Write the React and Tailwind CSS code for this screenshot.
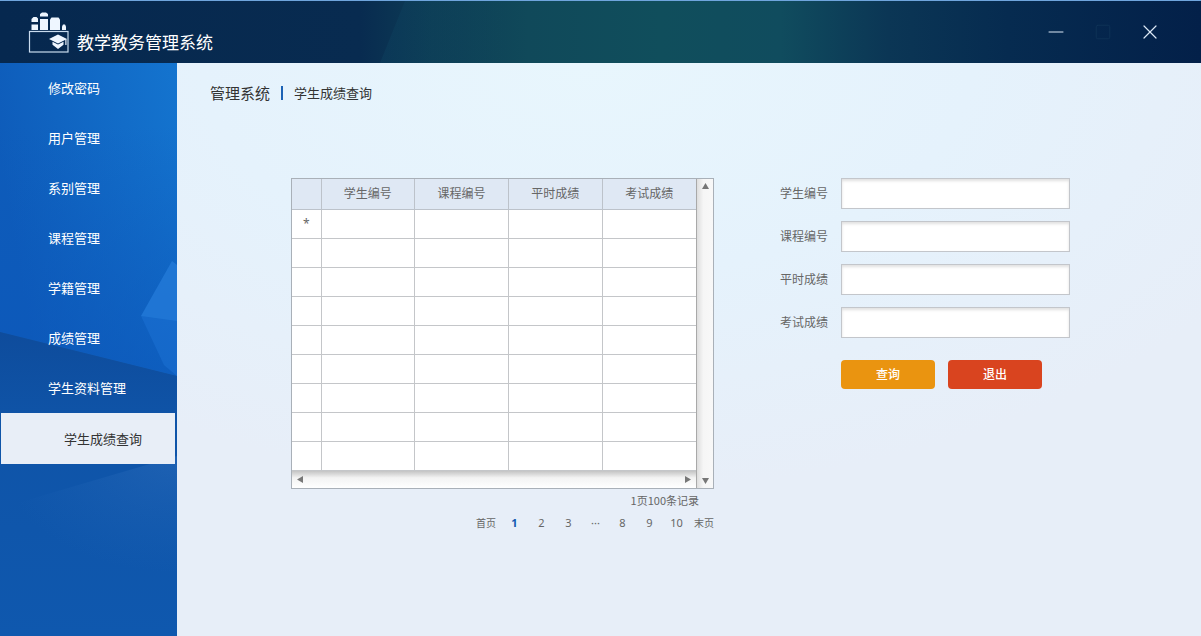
import React from 'react';
import { Minus, Square, X } from 'lucide-react';

const menuItems = [
  '修改密码',
  '用户管理',
  '系别管理',
  '课程管理',
  '学籍管理',
  '成绩管理',
  '学生资料管理',
];

const columns = ['学生编号', '课程编号', '平时成绩', '考试成绩'];
const pages = ['1', '2', '3', '···', '8', '9', '10'];
const rows = [0, 1, 2, 3, 4, 5, 6, 7, 8];

const Logo = () => (
  <svg width="42" height="42" viewBox="0 0 42 42" fill="none" aria-hidden="true">
    <rect x="1.5" y="19.5" width="38.5" height="20.5" stroke="#c9dcef" strokeWidth="1.2" />
    <g fill="#eef6ff">
      <path d="M3.500 10V7l2-2h3l1.500 1.500V10zM3.500 12.500H10V18H3.500z" />
      <path d="M12 4.500V2l2-1.500h4L20 2v2.500zM12 7h8v11h-8z" />
      <path d="M22 18V7.500L23.500 5.500h7l1.500 2V18z" />
      <path d="M34 18v-3.500l1-2h2l1 2V18z" />
      <path d="M30 22.500l9 4.500-9 4.500-9-4.500z" />
      <path d="M24.500 29.700l5.500 2.800 5.500-2.800v3L30 37l-5.500-4.300z" />
      <path d="M37.300 27h1.200v6h-1.200z" />
    </g>
  </svg>
);

const Header = () => (
  <header className="relative flex h-[63px] items-center justify-between border-t border-[#6fa5dd] bg-[#05264d] pr-[39px] pl-7">
    <svg className="absolute inset-0 h-full w-full" viewBox="0 0 1201 62" preserveAspectRatio="none" aria-hidden="true">
      <defs>
        <linearGradient id="headBg">
          <stop offset="0" stopColor="#06284f" />
          <stop offset="0.3" stopColor="#082b50" />
          <stop offset="0.36" stopColor="#0d3d55" />
          <stop offset="0.44" stopColor="#10495a" />
          <stop offset="0.55" stopColor="#104e5c" />
          <stop offset="0.65" stopColor="#104c5e" />
          <stop offset="0.74" stopColor="#0b3655" />
          <stop offset="0.84" stopColor="#062b50" />
          <stop offset="1" stopColor="#032049" />
        </linearGradient>
        <linearGradient id="headFacet">
          <stop offset="0" stopColor="#0f4a66" stopOpacity="0.3" />
          <stop offset="0.4" stopColor="#0f4a66" stopOpacity="0" />
        </linearGradient>
      </defs>
      <rect width="1201" height="62" fill="url(#headBg)" />
      <path d="M405 0L380 62H700V0z" fill="url(#headFacet)" />
    </svg>
    <div className="relative flex items-center gap-[7px] pt-px">
      <Logo />
      <h1 className="pt-5 text-[17px] leading-6 text-white">教学教务管理系统</h1>
    </div>
    <div className="relative flex items-center gap-[26px] text-[#dce8f5]">
      <button type="button" aria-label="最小化">
        <Minus size={24} strokeWidth={1} />
      </button>
      <button type="button" aria-label="最大化" disabled className="text-[#123659]">
        <Square size={18} strokeWidth={1} />
      </button>
      <button type="button" aria-label="关闭">
        <X size={24} strokeWidth={1.200} />
      </button>
    </div>
  </header>
);

const Sidebar = () => (
  <aside className="relative w-[177px] shrink-0 overflow-hidden bg-[#0f57ac]">
    <svg className="absolute top-0 left-0" width="177" height="573" viewBox="0 0 177 573" aria-hidden="true">
      <defs>
        <linearGradient id="sideTop" x1="0" y1="0.300" x2="1" y2="0">
          <stop offset="0" stopColor="#0e5cba" />
          <stop offset="1" stopColor="#1474cf" />
        </linearGradient>
        <linearGradient id="sideFade" x1="0" y1="0" x2="0" y2="1">
          <stop offset="0.200" stopColor="#0c57ba" stopOpacity="0" />
          <stop offset="1" stopColor="#0c57ba" stopOpacity="0.700" />
        </linearGradient>
        <linearGradient id="sideLow" x1="0" y1="0" x2="0" y2="1">
          <stop offset="0" stopColor="#0e4c9c" />
          <stop offset="0.300" stopColor="#0f54a8" />
          <stop offset="1" stopColor="#0f58ae" />
        </linearGradient>
        <radialGradient id="sideRay" cx="1" cy="0" r="1">
          <stop offset="0" stopColor="#3a78c4" stopOpacity="0.350" />
          <stop offset="1" stopColor="#2a6fc0" stopOpacity="0" />
        </radialGradient>
      </defs>
      <path d="M0 0H177V313L0 269z" fill="url(#sideTop)" />
      <path d="M0 0H177V313L0 269z" fill="url(#sideFade)" />
      <path d="M172 198L177 202V313L164 302L141 253z" fill="#1a70d2" opacity="0.600" />
      <path d="M172 198L177 202V258L141 253z" fill="#2e86e2" opacity="0.400" />
      <path d="M0 269L177 313V573H0z" fill="url(#sideLow)" />
      <path d="M177 393L0 445V510H177z" fill="url(#sideRay)" />
    </svg>
    <nav className="relative text-[13px] leading-5 text-white">
      {menuItems.map((item) => (
        <a key={item} href="#" className="flex h-[50px] items-center pl-12">
          {item}
        </a>
      ))}
      <a
        href="#"
        aria-current="page"
        className="mr-[2px] ml-px flex h-[51px] items-center bg-[#e8eef7] pl-[63px] text-[#333]"
      >
        学生成绩查询
      </a>
    </nav>
  </aside>
);

const Arrow = ({ points }) => (
  <svg width="7" height="7" viewBox="0 0 7 7" fill="#777" aria-hidden="true">
    <polygon points={points} />
  </svg>
);

const ScoreTable = () => (
  <section>
    <div className="grid grid-cols-[1fr_17px] border border-[#a9b0b8] bg-white">
      <div>
        <table className="w-full table-fixed border-collapse text-xs text-[#666]">
          <thead>
            <tr className="h-[30px] bg-[#dfe8f4]">
              <th className="w-[29px] border-r border-b border-[#bcc2ca] p-0" aria-label="行标记"></th>
              {columns.map((col) => (
                <th key={col} className="border-b border-l border-[#bcc2ca] p-0 font-normal">
                  {col}
                </th>
              ))}
            </tr>
          </thead>
          <tbody>
            {rows.map((row) => (
              <tr key={row} className="h-[29px]">
                <td className="border-r border-b border-[#c4c6c9] p-0 text-center">{row === 0 ? '*' : ''}</td>
                {columns.map((col) => (
                  <td key={col} className="border-b border-l border-[#c4c6c9] p-0"></td>
                ))}
              </tr>
            ))}
          </tbody>
        </table>
        <div className="flex h-[17px] items-center justify-between bg-linear-to-b from-[#c4c4c4] via-[#f3f3f3] via-40% to-white px-[5px]">
          <Arrow points="6,0 6,7 0,3.500" />
          <Arrow points="1,0 1,7 7,3.500" />
        </div>
      </div>
      <div className="flex flex-col items-center justify-between border-l border-[#a9a9a9] bg-linear-to-r from-[#dedede] via-[#f6f6f6] via-40% to-[#f8f8f8] py-1">
        <Arrow points="0,6 7,6 3.500,0" />
        <Arrow points="0,1 7,1 3.500,7" />
      </div>
    </div>
    <p className="mt-[3px] pr-[15px] text-right font-['Noto_Sans_CJK_SC',sans-serif] text-[11px] leading-4 text-[#666]">
      1页100条记录
    </p>
    <nav className="mt-[7px] flex items-center justify-end text-[10px] leading-4 text-[#666]" aria-label="分页">
      <a href="#" className="mr-[5px]">首页</a>
      {pages.map((page) => (
        <a
          key={page}
          href="#"
          className={page === '1' ? 'w-[27px] text-center text-[11px] font-bold text-[#1159b0]' : 'w-[27px] text-center text-[11px]'}
        >
          {page}
        </a>
      ))}
      <a href="#" className="ml-1">末页</a>
    </nav>
  </section>
);

const QueryForm = () => (
  <form onSubmit={(e) => e.preventDefault()}>
    <div className="flex flex-col gap-3">
      {columns.map((field) => (
        <label key={field} className="flex items-center gap-[13px] text-xs text-[#666]">
          <span className="shrink-0">{field}</span>
          <input
            type="text"
            className="h-[31px] w-full min-w-0 border border-[#c3c6cb] bg-white px-2 shadow-[inset_0_2px_3px_rgba(0,0,0,0.12)] outline-none"
          />
        </label>
      ))}
    </div>
    <div className="mt-[22px] flex gap-[13px] pl-[61px] text-xs font-medium text-white">
      <button type="submit" className="h-[29px] w-[94px] rounded bg-[#ea9410]">
        查询
      </button>
      <button type="button" className="h-[29px] w-[94px] rounded bg-[#d9441f]">
        退出
      </button>
    </div>
  </form>
);

const App = () => {
  return (
    <div className="flex min-h-screen flex-col font-['Noto_Sans','Noto_Sans_CJK_SC',sans-serif]">
      <Header />
      <div className="flex flex-1">
        <Sidebar />
        <main className="flex-1 bg-[#e7eef8] bg-[radial-gradient(ellipse_75%_75%_at_40%_0%,#e8f6fd_0%,#e5f2fc_50%,#e7eef8_100%)]">
          <div className="flex items-center pt-[18px] pl-[33px] text-[#333]">
            <h2 className="text-[15px] leading-6">管理系统</h2>
            <span className="mx-[11px] h-[14px] w-[2px] bg-[#1b62b5]"></span>
            <span className="text-[13px] leading-6">学生成绩查询</span>
          </div>
          <div className="mt-[73px] grid grid-cols-[423fr_290fr] gap-[66px] pr-[131px] pl-[114px]">
            <ScoreTable />
            <QueryForm />
          </div>
        </main>
      </div>
    </div>
  );
};

export default App;
